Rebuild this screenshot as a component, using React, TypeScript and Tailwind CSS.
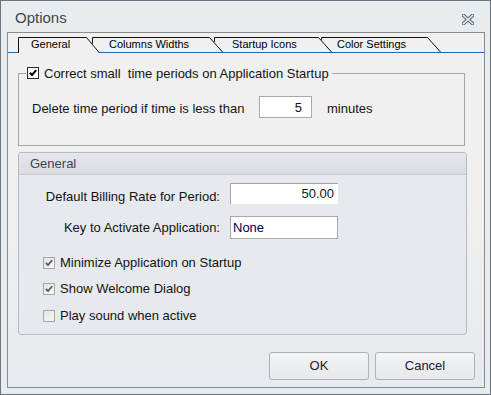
import React from "react";

// Classic WinForms-style "Options" dialog

type TabProps = {
  label: string;
  width: number;
  active?: boolean;
  z: string;
  pad: string;
  overlap: string;
};

function Tab({ label, width, active, z, pad, overlap }: TabProps) {
  const h = active ? 16 : 15;
  const slant = 13;
  return (
    <div
      className={`relative ${z} ${overlap} ${active ? "h-[16px] -mb-px" : "h-[15px]"} shrink-0`}
      style={{ width }}
    >
      <svg className="absolute inset-0" width={width} height={h}>
        <polygon
          points={`0,${h} 0,0 ${width - slant},0 ${width},${h}`}
          fill="#f0f0f0"
        />
        <polyline
          points={`0.5,${h} 0.5,0.5 ${width - slant - 0.5},0.5 ${width - 0.5},${h}`}
          fill="none"
          stroke="#111"
          strokeWidth="1"
        />
      </svg>
      <span className={`relative block ${pad} text-[11px] leading-[14px] text-black`}>
        {label}
      </span>
    </div>
  );
}

function ClassicCheck() {
  return (
    <span className="w-[12px] h-[12px] border border-[#2b2b2b] bg-white flex items-center justify-center">
      <svg width="8" height="8" viewBox="0 0 8 8">
        <path d="M0.8 3.8 L3 6 L7.2 1.2" fill="none" stroke="#000" strokeWidth="2" />
      </svg>
    </span>
  );
}

function SoftCheck({ checked }: { checked?: boolean }) {
  return (
    <span className="w-[12px] h-[12px] border border-[#a7a7a7] bg-gradient-to-br from-[#e4e4e4] to-[#f7f7f7] flex items-center justify-center">
      {checked && (
        <svg width="8" height="8" viewBox="0 0 8 8">
          <path d="M0.8 3.8 L3 6 L7.2 1.2" fill="none" stroke="#555" strokeWidth="1.7" />
        </svg>
      )}
    </span>
  );
}

export default function App() {
  return (
    <div className="w-[491px] h-[395px] bg-[#e9ecef] border border-[#6c7680] flex flex-col font-['Liberation_Sans',Arial,sans-serif] text-[13px] text-[#141414]">
      {/* Title bar */}
      <div className="h-[31px] shrink-0 flex items-center justify-between pt-[3px] pl-[14px] pr-[16px]">
        <span className="text-[15px] text-[#3c4652]">Options</span>
        <svg width="12" height="11" viewBox="0 0 12 11" className="mt-[3px]">
          <path d="M1.5 1.5 L10.5 9.5 M10.5 1.5 L1.5 9.5" stroke="#56606a" strokeWidth="3.6" strokeLinecap="square" />
          <path d="M1.5 1.5 L10.5 9.5 M10.5 1.5 L1.5 9.5" stroke="#e9ecef" strokeWidth="1.6" strokeLinecap="square" />
        </svg>
      </div>

      {/* Frame */}
      <div className="ml-[6px] mr-[5px] mb-[6px] flex-1 border border-[#868c92] bg-gradient-to-b from-[#f0f0f0] via-[#f0f0f0] to-[#e7eaee] flex flex-col">
        {/* Tab strip */}
        <div className="h-[20px] shrink-0 border-b border-[#2565b8] flex items-end pl-[10px]">
          <Tab label="General" width={82} active z="z-40" pad="pl-[13px]" overlap="" />
          <Tab label="Columns Widths" width={131} z="z-30" pad="pl-[17px]" overlap="-ml-[8px]" />
          <Tab label="Startup Icons" width={118} z="z-20" pad="pl-[18px]" overlap="-ml-[9px]" />
          <Tab label="Color Settings" width={120} z="z-10" pad="pl-[16px]" overlap="-ml-[11px]" />
        </div>

        {/* Group 1 */}
        <fieldset className="mt-[13px] ml-[10px] w-[447px] h-[80px] border border-[#a5a5a5]">
          <legend className="ml-[7px] pl-px pr-[3px] h-[14px] flex items-center gap-[5px]">
            <ClassicCheck />
            <span className="leading-[14px] pt-px">Correct small&nbsp; time periods on Application Startup</span>
          </legend>
          <div className="mt-[16px] pl-[13px] flex items-center">
            <span className="w-[227px] pt-[3px]">Delete time period if time is less than</span>
            <div className="w-[53px] h-[22px] border border-[#a9a9a9] bg-white flex items-center justify-end pr-[9px]">
              5
            </div>
            <span className="ml-[15px] pt-[3px]">minutes</span>
          </div>
        </fieldset>

        {/* Group 2 */}
        <div className="mt-[6px] ml-[10px] w-[449px] h-[183px] border border-[#b7bbc1] rounded-[3px] bg-[#e6e9ed] flex flex-col">
          <div className="h-[22px] bg-gradient-to-b from-[#e4e7eb] to-[#d9dde2] border-b border-[#c6cad0] flex items-center pl-[11px] pt-px text-[#3a4451] rounded-t-[2px]">
            General
          </div>
          <div className="mt-[8px] flex items-end">
            <span className="w-[201px] text-right leading-[15px]">Default Billing Rate for Period:</span>
            <div className="ml-[10px] w-[108px] h-[21px] border-t border-l border-[#a3a3a3] bg-white flex items-center justify-end pr-[4px]">
              50.00
            </div>
          </div>
          <div className="mt-[12px] flex items-center">
            <span className="w-[201px] text-right pt-px">Key to Activate Application:</span>
            <div className="ml-[10px] w-[108px] h-[23px] border border-[#a9a9a9] bg-white flex items-center pl-[2px] text-[#000050]">
              None
            </div>
          </div>
          <div className="mt-[18px] pl-[24px] flex flex-col">
            <label className="flex items-center gap-[5px] h-[12px]">
              <SoftCheck checked />
              <span>Minimize Application on Startup</span>
            </label>
            <label className="mt-[14px] flex items-center gap-[5px] h-[12px]">
              <SoftCheck checked />
              <span>Show Welcome Dialog</span>
            </label>
            <label className="mt-[15px] flex items-center gap-[5px] h-[12px]">
              <SoftCheck />
              <span>Play sound when active</span>
            </label>
          </div>
        </div>

        {/* Buttons */}
        <div className="mt-[17px] pr-[9px] flex justify-end gap-[6px]">
          <button className="w-[100px] h-[28px] rounded-[3px] border border-[#adb2b8] bg-gradient-to-b from-[#f3f4f5] to-[#e6e8ea] text-[#222]">
            OK
          </button>
          <button className="w-[100px] h-[28px] rounded-[3px] border border-[#adb2b8] bg-gradient-to-b from-[#f3f4f5] to-[#e6e8ea] text-[#222]">
            Cancel
          </button>
        </div>
      </div>
    </div>
  );
}
